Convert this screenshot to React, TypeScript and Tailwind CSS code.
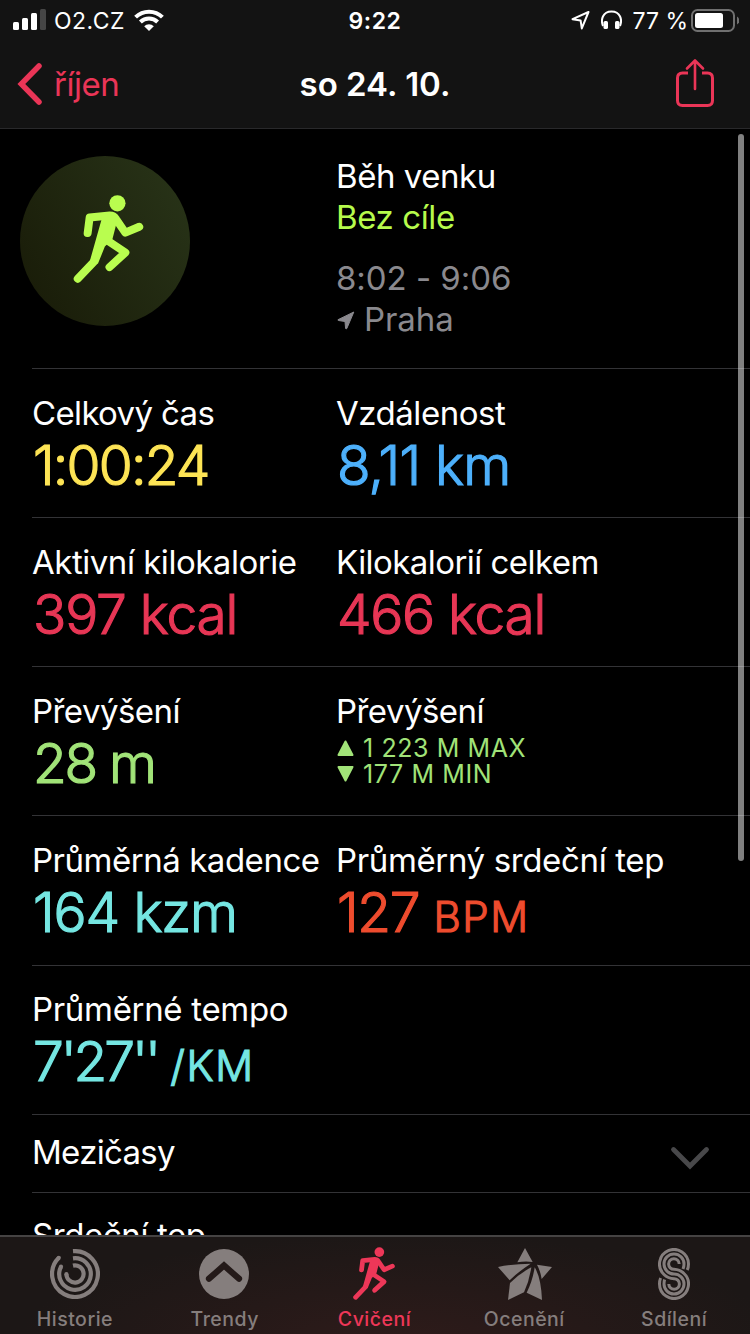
import type { ReactNode } from "react";

function Runner({ className }: { className: string }) {
  return (
    <svg viewBox="218 164 212 266" className={className} fill="none" stroke="currentColor" strokeWidth="24" strokeLinecap="round" strokeLinejoin="round">
      <circle cx="351" cy="189" r="24.5" fill="currentColor" stroke="none" />
      <path d="M261 279 L267 232 L328 226 Q340 226 347 237 L375 278 L417 260" />
      <path d="M231 417 L280 366" />
      <path d="M324 304 L375 338 L327 382" />
      <path d="M303 222 L345 226 L348 250 L336 297 L313 320 L292 372 L268 362 L303 238 Z" fill="currentColor" stroke="none" />
    </svg>
  );
}

function StatusBar() {
  return (
    <div className="grid h-10 grid-cols-3 items-center text-[23px] text-white">
      <div className="flex items-center pl-[13px]">
        <svg className="h-[22px] w-[33px]" viewBox="0 0 33 22">
          <rect x="0" y="13" width="6" height="8" rx="1.5" fill="#fff" />
          <rect x="9" y="9" width="6" height="12" rx="1.5" fill="#fff" />
          <rect x="18" y="4" width="6" height="17" rx="1.5" fill="#fff" />
          <rect x="27" y="0" width="6" height="21" rx="1.5" fill="#464646" />
        </svg>
        <span className="ml-2 w-[72px] whitespace-nowrap pt-[2px] leading-[38px] tracking-[0.5px]">O2.CZ</span>
        <svg className="ml-[8px] h-[22px] w-[30px]" viewBox="0 0 30 22" fill="none" stroke="#fff" strokeWidth="4">
          <path d="M1.6 8.2 A19 19 0 0 1 28.4 8.2" />
          <path d="M6.4 13 A12.2 12.2 0 0 1 23.6 13" />
          <path d="M15 22 L10.2 17.2 A6.8 6.8 0 0 1 19.8 17.2 Z" fill="#fff" stroke="none" />
        </svg>
      </div>
      <div className="pt-[2px] text-center leading-[38px] font-semibold tracking-[0.6px]">9:22</div>
      <div className="flex items-center justify-end pr-[11px]">
        <svg className="h-[20px] w-[19px]" viewBox="0 0 19 20" fill="none" stroke="#fff" strokeWidth="2" strokeLinejoin="round">
          <path d="M17.5 2 L1.5 9.2 L9.6 10.4 L10.8 18.4 Z" />
        </svg>
        <svg className="ml-[11px] h-[20px] w-[21px]" viewBox="0 0 21 20" fill="none">
          <path d="M2 16 C-0.5 10 1.5 1.5 10.5 1.5 C19.5 1.5 21.500 10 19 16" stroke="#fff" strokeWidth="2" />
          <rect x="2.500" y="11" width="4.500" height="8" rx="1.600" fill="#fff" />
          <rect x="14" y="11" width="4.500" height="8" rx="1.600" fill="#fff" />
        </svg>
        <span className="ml-[10.500px] w-[54.500px] whitespace-nowrap pt-[2px] leading-[38px]">77 %</span>
        <svg className="ml-[4px] h-[23px] w-[48px]" viewBox="0 0 48 23" fill="none">
          <rect x="1" y="1" width="42" height="21" rx="5.500" stroke="#707070" strokeWidth="2" />
          <rect x="4" y="4" width="28" height="15" rx="2.500" fill="#fff" />
          <path d="M46 7.500 Q48.500 9 48.500 11.500 Q48.500 14 46 15.500 Z" fill="#707070" />
        </svg>
      </div>
    </div>
  );
}

function NavBar() {
  return (
    <div className="grid h-[88px] grid-cols-3 items-center text-[33px] leading-[42px]">
      <div className="flex items-center pl-[17px] text-[#ea3557]">
        <svg className="h-[44px] w-[26px]" viewBox="0 0 26 44" fill="none" stroke="currentColor" strokeWidth="5.500" strokeLinecap="round" strokeLinejoin="miter">
          <path d="M22 4 L4.300 22 L22 40" />
        </svg>
        <span className="ml-[11px] tracking-[-0.5px]">říjen</span>
      </div>
      <div className="text-center font-semibold text-white">so 24. 10.</div>
      <div className="flex justify-end pr-[35px]">
        <svg className="mt-[-2px] h-[50px] w-[40px] text-[#ea3557]" viewBox="0 0 40 50" fill="none" stroke="currentColor" strokeWidth="3" strokeLinecap="round" strokeLinejoin="round">
          <path d="M13 15 H7.500 Q2.500 15 2.500 20 V42.500 Q2.500 47.500 7.500 47.500 H32.500 Q37.500 47.500 37.500 42.500 V20 Q37.500 15 32.500 15 H27" strokeLinecap="butt" />
          <path d="M20 31 V3 M12 10.500 L20 2.500 L28 10.500" strokeWidth="2.600" />
        </svg>
      </div>
    </div>
  );
}

interface MetricProps {
  label: string;
  labelTracking?: string;
  tone: string;
  children: ReactNode;
}

function Metric({ label, labelTracking = "tracking-[-0.47px]", tone, children }: MetricProps) {
  return (
    <div className="whitespace-nowrap">
      <div className={`text-[33px] leading-[42px] text-white ${labelTracking}`}>{label}</div>
      <div className={`mt-px pl-px text-[55px] leading-[60px] font-light [-webkit-text-stroke-width:1.2px] [stroke-linejoin:round] ${tone}`}>{children}</div>
    </div>
  );
}

function Unit({ children }: { children: ReactNode }) {
  return <span className="text-[42px] tracking-[1.6px]">{children}</span>;
}

function Row({ className = "h-[149px] pt-[23px]", children }: { className?: string; children: ReactNode }) {
  return (
    <div className={`ml-8 grid grid-cols-[304px_1fr] border-t border-[#333336] ${className}`}>
      {children}
    </div>
  );
}

function Summary() {
  return (
    <div className="grid h-[239px] grid-cols-[316px_1fr] pl-5">
      <div className="mt-[27px] flex size-[170px] items-center justify-center rounded-full bg-linear-[60deg,#181a07,#293519] text-[#b9fd4f]">
        <Runner className="mt-[-4px] h-[88px] w-[71px] translate-x-[3px]" />
      </div>
      <div className="whitespace-nowrap pt-[27px] text-[33px] leading-[41px] text-white">
        <div className="tracking-[-0.45px]">Běh venku</div>
        <div className="tracking-[-0.4px] text-[#b6fb4c]">Bez cíle</div>
        <div className="mt-5 tracking-[-0.05px] text-[#8a898e]">8:02 - 9:06</div>
        <div className="flex items-center pl-px text-[#8a898e]">
          <svg className="mt-px mr-[9px] h-[19px] w-[18px]" viewBox="0 0 18 19" fill="currentColor" stroke="currentColor" strokeWidth="1" strokeLinejoin="round">
            <path d="M16.800 1 L1 8.700 Q0.600 9.300 1.500 9.500 L8 10.500 L8.600 17.500 Q9 18.300 9.800 17.500 Z" />
          </svg>
          <span className="tracking-[-0.1px]">Praha</span>
        </div>
      </div>
    </div>
  );
}

function Tab({ label, active, children }: { label: string; active?: boolean; children: ReactNode }) {
  return (
    <div className={`flex flex-col items-center pt-[9px] text-[19.500px] leading-6 font-medium tracking-[0.5px] ${active ? "text-[#ed3758]" : "text-[#857e7d]"}`}>
      <div className="flex h-[56px] items-center">{children}</div>
      <div className="mt-[5px] whitespace-nowrap">{label}</div>
    </div>
  );
}

function TabBar() {
  return (
    <div className="grid h-[97px] w-[749px] grid-cols-5">
      <Tab label="Historie">
        <svg className="size-[50px]" viewBox="-25 -25 50 50" fill="none" stroke="currentColor" strokeWidth="4.200">
          <path d="M-2 -22.800 A22.900 22.900 0 1 1 -16.200 -16.200" />
          <path d="M-2 -15.700 A15.800 15.800 0 1 1 -14 -7.300" />
          <path d="M-2 -8.400 A8.600 8.600 0 1 1 -8.600 0" />
          <g fill="currentColor" stroke="none">
            <circle cx="-16.200" cy="-16.200" r="2.100" />
            <circle cx="-14" cy="-7.300" r="2.100" />
            <circle cx="-8.600" cy="0" r="2.100" />
          </g>
        </svg>
      </Tab>
      <Tab label="Trendy">
        <svg className="mr-px size-[50px]" viewBox="0 0 50 50" fill="none">
          <circle cx="25" cy="25" r="25" fill="currentColor" />
          <path d="M10 29.700 L25 16.500 L40 29.700" stroke="#241a19" strokeWidth="6.200" strokeLinecap="round" />
        </svg>
      </Tab>
      <Tab label="Cvičení" active>
        <Runner className="mt-[-2px] h-[53px] w-[42px]" />
      </Tab>
      <Tab label="Ocenění">
        <svg className="ml-[2px] h-[52px] w-[54px]" viewBox="84 387 162 156" fill="currentColor">
          <path d="M165 387 L188 429 Q165 426 142 430 Z" />
          <path d="M84 444 Q130 435 182 434 Q145 458 119 484 Z" />
          <path d="M201 437 L246 444 L215 480 Q211 455 201 437 Z" />
          <path d="M184 445 Q178 485 162 520 L114 543 L120 492 Q150 462 184 445 Z" />
          <path d="M194 445 Q213 475 216 543 L170 521 Q188 485 194 445 Z" />
        </svg>
      </Tab>
      <Tab label="Sdílení">
        <svg className="h-[52px] w-[32px]" viewBox="0 0 32 52" fill="none" stroke="currentColor" strokeWidth="3">
          <path d="M29.200 22 Q30.500 19.500 30.500 16 A14.500 14.500 0 1 0 6 26.500 C9 29.500 12 30.500 16 30.700 A5.300 5.300 0 1 1 10.800 36" />
          <path d="M25 21 Q26 18.500 26 16 A10 10 0 1 0 16 26 A10 10 0 1 1 6 36 Q6 33.500 6.600 31.500" />
          <path d="M21.200 16 A5.300 5.300 0 1 0 16 21.300 C20 21.500 23 22.500 26 25.500 A14.500 14.500 0 1 1 1.500 36 Q1.500 32.500 2.600 30" />
        </svg>
      </Tab>
    </div>
  );
}

export default function App() {
  return (
    <div className="relative flex h-[1334px] w-[750px] flex-col overflow-hidden bg-black font-['Inter','Liberation_Sans',sans-serif]">
      <header className="h-[129px] shrink-0 border-b border-[#29292b] bg-[#131313]">
        <StatusBar />
        <NavBar />
      </header>
      <main className="h-[1106px] shrink-0 overflow-hidden">
        <Summary />
        <Row>
          <Metric label="Celkový čas" labelTracking="tracking-[-0.65px]" tone="text-[#fde455] tracking-[-1.8px]">1:00:24</Metric>
          <Metric label="Vzdálenost" tone="text-[#4db0fb] tracking-[-0.8px]">8,11 km</Metric>
        </Row>
        <Row>
          <Metric label="Aktivní kilokalorie" tone="text-[#e73655] tracking-[-1.2px]">397 kcal</Metric>
          <Metric label="Kilokalorií celkem" labelTracking="tracking-[-0.55px]" tone="text-[#e73655] tracking-[-1.3px]">466 kcal</Metric>
        </Row>
        <Row>
          <Metric label="Převýšení" labelTracking="tracking-[-0.55px]" tone="text-[#a1e378] tracking-[-2.3px]">28 m</Metric>
          <div className="whitespace-nowrap">
            <div className="text-[33px] leading-[42px] tracking-[-0.55px] text-white">Převýšení</div>
            <div className="mt-[3px] pl-px text-[25px] leading-[26px] tracking-[0.6px] text-[#a1e378]">
              <div className="flex items-center gap-[9px]">
                <svg className="h-[16px] w-[17px]" viewBox="0 0 17 16" fill="currentColor" stroke="currentColor" strokeWidth="2" strokeLinejoin="round">
                  <path d="M8.500 1.500 L15.500 15 H1.500 Z" />
                </svg>
                <span>1 223 M MAX</span>
              </div>
              <div className="flex items-center gap-[9px]">
                <svg className="h-[16px] w-[17px]" viewBox="0 0 17 16" fill="currentColor" stroke="currentColor" strokeWidth="2" strokeLinejoin="round">
                  <path d="M8.500 14.500 L15.500 1 H1.500 Z" />
                </svg>
                <span>177 M MIN</span>
              </div>
            </div>
          </div>
        </Row>
        <Row className="h-[150px] pt-[23px]">
          <Metric label="Průměrná kadence" tone="text-[#75e6e2] tracking-[-1.1px]">164 kzm</Metric>
          <Metric label="Průměrný srdeční tep" labelTracking="tracking-[-0.36px]" tone="text-[#ee4c2e] tracking-[-1.3px]">
            127 <Unit>BPM</Unit>
          </Metric>
        </Row>
        <Row className="h-[149px] pt-[22px]">
          <Metric label="Průměrné tempo" labelTracking="tracking-[-0.32px]" tone="text-[#75e6e2] tracking-[-3.1px]">
            7'27'' <Unit>/KM</Unit>
          </Metric>
        </Row>
        <div className="ml-8 flex h-[78px] items-center justify-between border-t border-[#333336] pr-[40px] text-[33px] leading-[42px] text-white">
          <span className="mt-[-4px] tracking-[-0.7px]">Mezičasy</span>
          <svg className="mt-[9px] h-[24px] w-[40px]" viewBox="0 0 40 24" fill="none" stroke="#48484a" strokeWidth="4.800" strokeLinecap="round">
            <path d="M3.500 3.500 L20 20 L36.500 3.500" />
          </svg>
        </div>
        <div className="ml-8 border-t border-[#333336] pt-[21px] text-[33px] leading-[42px] tracking-[-0.4px] text-white">Srdeční tep</div>
      </main>
      <footer className="h-[99px] shrink-0 border-t-2 border-[#454343] bg-[radial-gradient(ellipse_380px_110px_at_400px_105px,#2e1b1a,#1c1716)]">
        <TabBar />
      </footer>
      <div className="absolute top-[134px] left-[738px] h-[727px] w-[6px] rounded-full bg-white/50" />
    </div>
  );
}
